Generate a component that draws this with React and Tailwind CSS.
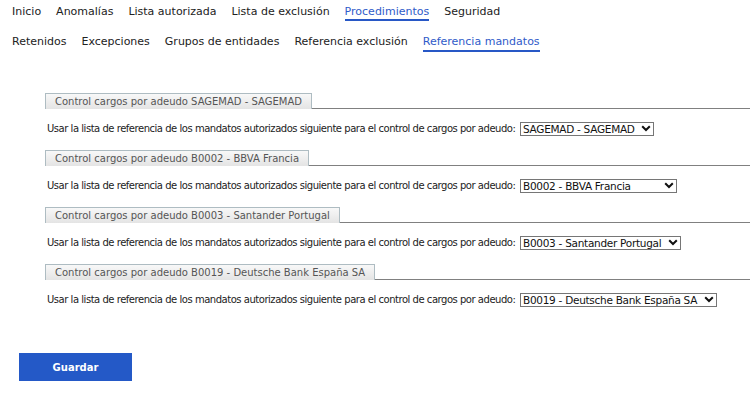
import { useState } from 'react';

const mainNav = ['Inicio', 'Anomalías', 'Lista autorizada', 'Lista de exclusión', 'Procedimientos', 'Seguridad'];
const subNav = ['Retenidos', 'Excepciones', 'Grupos de entidades', 'Referencia exclusión', 'Referencia mandatos'];

const bloques = [
  { titulo: 'Control cargos por adeudo SAGEMAD - SAGEMAD', valor: 'SAGEMAD - SAGEMAD', ancho: 'w-[134px]' },
  { titulo: 'Control cargos por adeudo B0002 - BBVA Francia', valor: 'B0002 - BBVA Francia', ancho: 'w-[157px]' },
  { titulo: 'Control cargos por adeudo B0003 - Santander Portugal', valor: 'B0003 - Santander Portugal', ancho: 'w-[161px]' },
  { titulo: 'Control cargos por adeudo B0019 - Deutsche Bank España SA', valor: 'B0019 - Deutsche Bank España SA', ancho: 'w-[197px]' },
];

function Chevron() {
  return (
    <svg width="10" height="7" viewBox="0 0 10 7" className="shrink-0">
      <path d="M1.2 1.2 L5 5 L8.8 1.2" fill="none" stroke="#111" strokeWidth="2" />
    </svg>
  );
}

function Bloque({ titulo, valor, ancho }) {
  return (
    <div className="h-[57px]">
      <div className="flex items-end h-[16px]">
        <div className="h-[16px] px-[9px] border-t border-l border-r border-[#aebcc2] bg-gradient-to-b from-[#f8f8f8] to-[#e4e4e4] text-[10px] leading-[15px] text-[#555] whitespace-nowrap">
          {titulo}
        </div>
        <div className="flex-1 h-[16px] border-b border-[#808080]" />
      </div>
      <div className="flex items-center h-[41px] pl-[2px] -mt-[1px]">
        <span className="w-[473px] shrink-0 text-[10px] tracking-[-0.47px] text-[#222] whitespace-nowrap overflow-hidden">
          Usar la lista de referencia de los mandatos autorizados siguiente para el control de cargos por adeudo:
        </span>
        <div className={`${ancho} h-[14px] border border-[#767676] flex items-center gap-[3px] pl-[2px] pr-[2px] bg-white`}>
          <span className="flex-1 text-[10.5px] leading-[12px] tracking-[-0.28px] text-[#111] whitespace-nowrap overflow-hidden">{valor}</span>
          <Chevron />
        </div>
      </div>
    </div>
  );
}

export default function App() {
  const [activo] = useState('Procedimientos');
  const [sub] = useState('Referencia mandatos');

  return (
    <div className="min-h-screen bg-white font-['DejaVu_Sans',Verdana,sans-serif] text-[#222] pt-[5px]">
      <nav className="flex gap-[15px] pl-3">
        {mainNav.map(item => (
          <span
            key={item}
            className={`text-[11px] leading-[14px] border-b-2 ${item === activo ? 'text-[#2f5bc9] border-[#2858c6]' : 'border-transparent'}`}
          >
            {item}
          </span>
        ))}
      </nav>

      <nav className="flex gap-[15px] pl-3 mt-[14px]">
        {subNav.map(item => (
          <span
            key={item}
            className={`text-[11px] leading-[14px] pb-px border-b-2 ${item === sub ? 'text-[#2f5bc9] border-[#2858c6]' : 'border-transparent'}`}
          >
            {item}
          </span>
        ))}
      </nav>

      <div className="mt-[41px] pl-[45px]">
        {bloques.map(b => (
          <Bloque key={b.valor} {...b} />
        ))}
      </div>

      <div className="pl-[19px] mt-[32px]">
        <button className="w-[113px] h-[28px] bg-[#2459c7] text-white text-[10px] font-bold">
          Guardar
        </button>
      </div>
    </div>
  );
}
